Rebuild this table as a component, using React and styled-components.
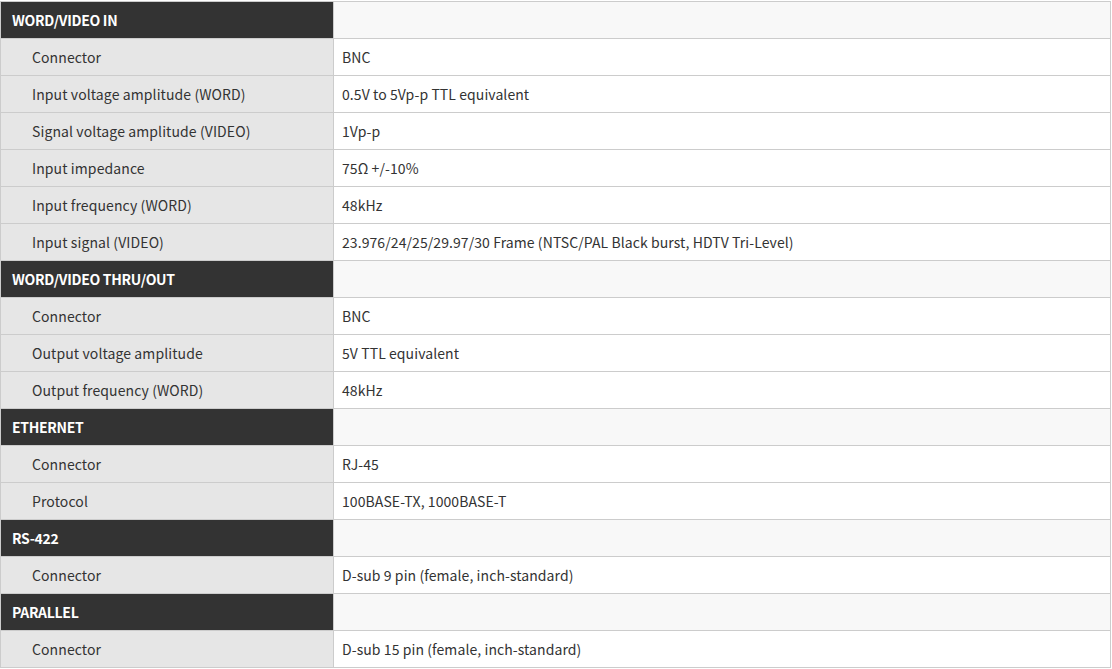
import React from "react";
import styled, { createGlobalStyle } from "styled-components";

const specs = [
  {
    title: "WORD/VIDEO IN",
    rows: [
      ["Connector", "BNC"],
      ["Input voltage amplitude (WORD)", "0.5V to 5Vp-p TTL equivalent"],
      ["Signal voltage amplitude (VIDEO)", "1Vp-p"],
      ["Input impedance", "75Ω +/-10%"],
      ["Input frequency (WORD)", "48kHz"],
      [
        "Input signal (VIDEO)",
        "23.976/24/25/29.97/30 Frame (NTSC/PAL Black burst, HDTV Tri-Level)",
      ],
    ],
  },
  {
    title: "WORD/VIDEO THRU/OUT",
    rows: [
      ["Connector", "BNC"],
      ["Output voltage amplitude", "5V TTL equivalent"],
      ["Output frequency (WORD)", "48kHz"],
    ],
  },
  {
    title: "ETHERNET",
    rows: [
      ["Connector", "RJ-45"],
      ["Protocol", "100BASE-TX, 1000BASE-T"],
    ],
  },
  {
    title: "RS-422",
    rows: [["Connector", "D-sub 9 pin (female, inch-standard)"]],
  },
  {
    title: "PARALLEL",
    rows: [["Connector", "D-sub 15 pin (female, inch-standard)"]],
  },
];

const GlobalStyle = createGlobalStyle`
  html, body {
    margin: 0;
    padding: 0;
    background: #ffffff;
  }
  body {
    font-family: "Noto Sans CJK JP", "Noto Sans", sans-serif;
    color: #333333;
  }
`;

const Wrapper = styled.div`
  padding-top: 1px;
  width: 1111px;
`;

const SpecTable = styled.table`
  width: 100%;
  border-collapse: collapse;
  table-layout: fixed;
  font-size: 14px;
`;

const Row = styled.tr`
  height: 37px;
`;

const Label = styled.th`
  width: 333px;
  box-sizing: border-box;
  text-align: left;
  font-weight: ${(p) => (p.$head ? 700 : 400)};
  background: ${(p) => (p.$head ? "#333333" : "#e6e6e6")};
  color: ${(p) => (p.$head ? "#ffffff" : "#333333")};
  padding: 0 0 0 ${(p) => (p.$head ? "11px" : "31px")};
  border: 1px solid #cccccc;
  vertical-align: middle;
  letter-spacing: ${(p) => (p.$head ? "-0.3px" : "0.1px")};
  white-space: nowrap;
`;

const Value = styled.td`
  background: ${(p) => (p.$head ? "#f8f8f8" : "#ffffff")};
  padding: 0 0 0 8px;
  border: 1px solid #cccccc;
  vertical-align: middle;
  color: #333333;
  letter-spacing: 0.08px;
  white-space: nowrap;
`;

const App = () => {
  return (
    <>
      <GlobalStyle />
      <Wrapper>
        <SpecTable>
          <tbody>
            {specs.map((group) => (
              <React.Fragment key={group.title}>
                <Row>
                  <Label $head>{group.title}</Label>
                  <Value $head />
                </Row>
                {group.rows.map(([name, val], i) => (
                  <Row key={group.title + i}>
                    <Label>{name}</Label>
                    <Value>{val}</Value>
                  </Row>
                ))}
              </React.Fragment>
            ))}
          </tbody>
        </SpecTable>
      </Wrapper>
    </>
  );
};

export default App;
